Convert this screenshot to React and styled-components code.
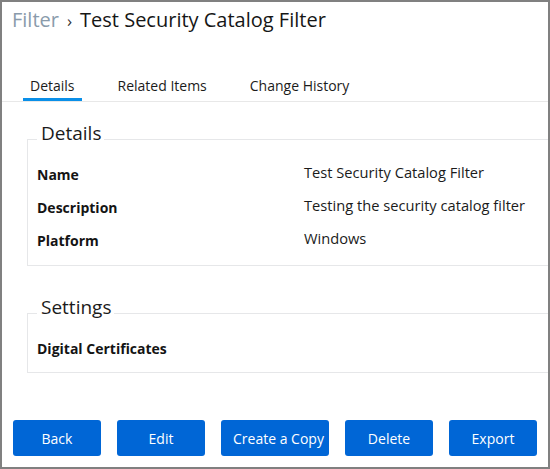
import React from "react";
import styled, { createGlobalStyle } from "styled-components";

const GlobalStyle = createGlobalStyle`
  html, body {
    margin: 0;
    padding: 0;
    background: #fff;
    font-family: "Open Sans", "Noto Sans", sans-serif;
    color: #1b1b1b;
  }
  * { box-sizing: border-box; }
`;

const Frame = styled.div`
  width: 550px;
  height: 469px;
  border: 2px solid #808080;
  display: flex;
  flex-direction: column;
  overflow: hidden;
  background: #fff;
`;

const Header = styled.h1`
  margin: 0;
  padding: 6px 0 0 10px;
  font-size: 20px;
  line-height: 24px;
  font-weight: 400;
  color: #161616;
`;

const Crumb = styled.span`
  color: #8a9bab;
`;

const Chevron = styled.span`
  display: inline-block;
  margin: 0 8px;
  font-size: 17px;
  color: #333;
`;

const TabBar = styled.div`
  display: flex;
  gap: 29px;
  margin-top: 43px;
  padding-left: 21px;
  border-bottom: 1px solid #e8e8e8;
`;

const Tab = styled.div`
  padding: 0 7px 3px;
  font-size: 14px;
  line-height: 19px;
  color: #1b1b1b;
  border-bottom: 3px solid ${(p) => (p.$active ? "#0a8fe8" : "transparent")};
`;

const Main = styled.div`
  flex: 1;
  padding-top: 19px;
`;

const Section = styled.fieldset`
  margin: 0 -12px ${(p) => p.$gap || 0}px 25px;
  padding: 8px 9px ${(p) => p.$pad || 0}px;
  border: 1px solid #e6e7e9;
  min-width: 0;
`;

const Legend = styled.legend`
  margin-left: 0;
  padding: 0 3px 12px 4px;
  font-size: 19px;
  line-height: 24px;
  color: #1b1b1b;
`;

const Row = styled.div`
  display: grid;
  grid-template-columns: 267px 1fr;
  align-items: start;
  height: 33px;
`;

const Label = styled.div`
  font-size: 14px;
  line-height: 19px;
  font-weight: 700;
  color: #141414;
`;

const Value = styled.div`
  font-size: 14.67px;
  line-height: 15px;
  color: #1b1b1b;
`;

const Footer = styled.div`
  display: flex;
  gap: 16px;
  padding: 0 11px 11px;
`;

const Button = styled.button`
  min-width: 88px;
  height: 36px;
  padding: 0 12px;
  border: none;
  border-radius: 3px;
  background: #0066d6;
  color: #fff;
  font-family: inherit;
  font-size: 14px;
  white-space: nowrap;
  cursor: pointer;
`;

const details = [
  ["Name", "Test Security Catalog Filter"],
  ["Description", "Testing the security catalog filter"],
  ["Platform", "Windows"],
];

export default function App() {
  return (
    <>
      <GlobalStyle />
      <Frame>
        <Header>
          <Crumb>Filter</Crumb>
          <Chevron>›</Chevron>
          Test Security Catalog Filter
        </Header>
        <TabBar>
          <Tab $active>Details</Tab>
          <Tab>Related Items</Tab>
          <Tab>Change History</Tab>
        </TabBar>
        <Main>
          <Section $gap={29} $pad={1}>
            <Legend>Details</Legend>
            {details.map(([k, v]) => (
              <Row key={k}>
                <Label>{k}</Label>
                <Value>{v}</Value>
              </Row>
            ))}
          </Section>
          <Section>
            <Legend>Settings</Legend>
            <Row>
              <Label>Digital Certificates</Label>
            </Row>
          </Section>
        </Main>
        <Footer>
          <Button>Back</Button>
          <Button>Edit</Button>
          <Button>Create a Copy</Button>
          <Button>Delete</Button>
          <Button>Export</Button>
        </Footer>
      </Frame>
    </>
  );
}
